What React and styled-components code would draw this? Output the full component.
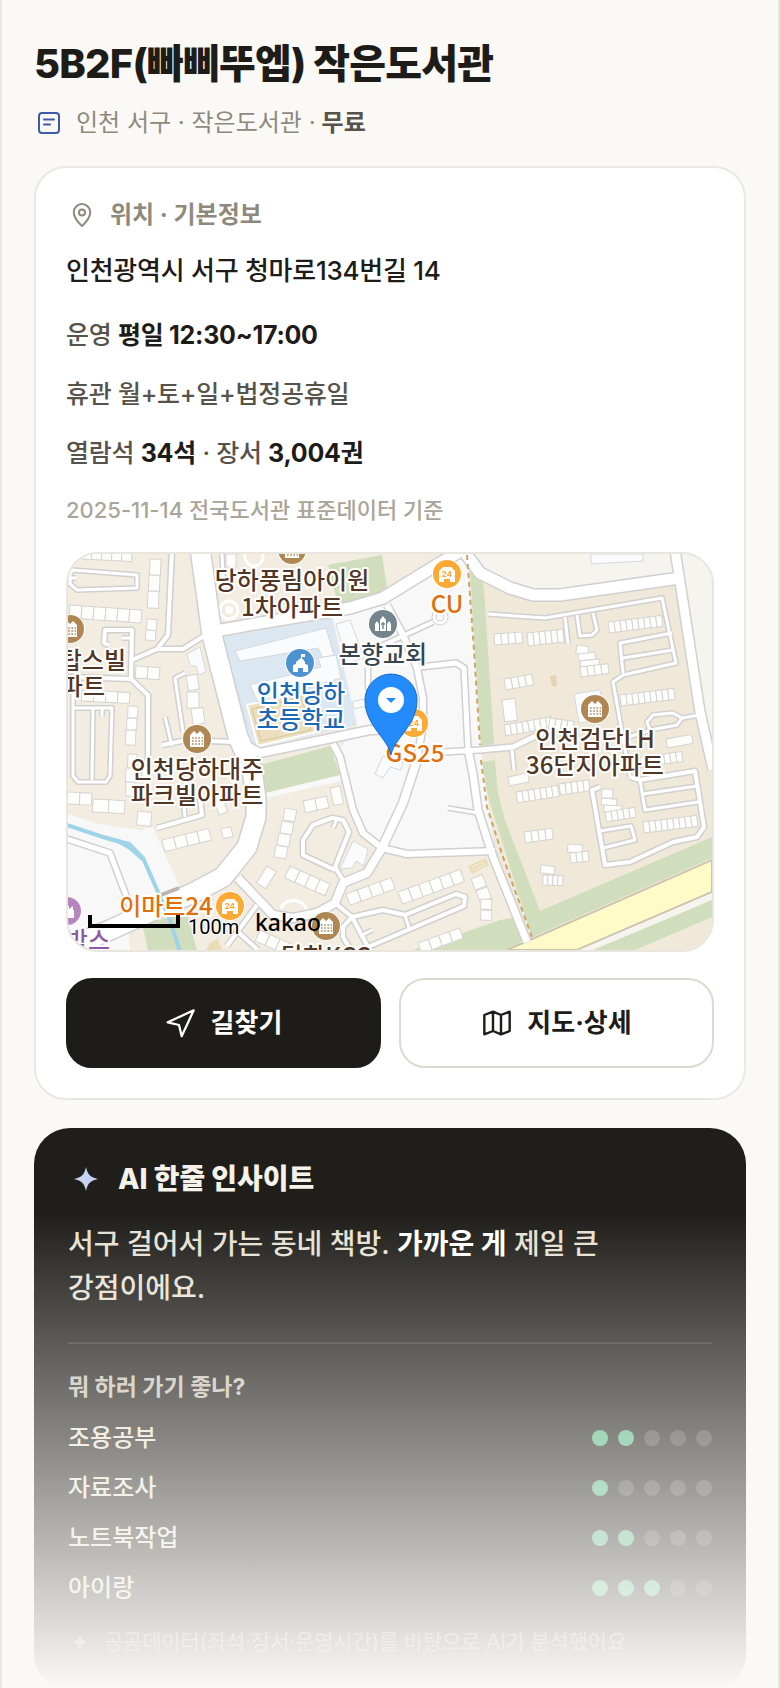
import React from 'react'
import styled, { createGlobalStyle } from 'styled-components';

const infoRows = [
  { id: 1, parts: [['운영 '], ['평일 12:30~17:00', true]] },
  { id: 2, parts: [['휴관 월+토+일+법정공휴일']] },
  { id: 3, parts: [['열람석 '], ['34석', true], [' · 장서 '], ['3,004권', true]] },
];

const scores = [
  { name: '조용공부', value: 2 },
  { name: '자료조사', value: 1 },
  { name: '노트북작업', value: 2 },
  { name: '아이랑', value: 3 },
];

// [d, width]
const roads = [
  ['M4 16 69 21 69 34 9 36 2 30 2 20Z', 3],
  ['M-4 24H8', 3],
  ['M104 -4 100 81 89 95 64 106', 4],
  ['M89 95H115L136 82', 4],
  ['M41 91 36 89 37 76H64L63 125', 4],
  ['M64 84H54', 3],
  ['M-4 123 63 125 80 141V204L76 222', 4],
  ['M5 140V222L10 228H38L42 222 44 154H5', 3],
  ['M25 154 24 226', 3],
  ['M34 155V162', 3],
  ['M117 119 107 124 115 178', 3],
  ['M97 163 104 192', 3],
  ['M94 191 119 186 166 188', 4],
  ['M89 274 134 261 132 244', 4],
  ['M117 263 115 244', 3],
  ['M-4 284 42 299 62 352', 5],
  ['M189 351 159 392', 4],
  ['M170 378 190 396', 4],
  ['M154 0 156 40', 3],
  ['M309 94 365 68', 4],
  ['M319 51 335 81 349 114 355 144 355 171 349 206', 6],
  ['M300 114V134L310 150', 4],
  ['M352 113 388 109 396 114 400 195', 5],
  ['M380 254 410 259', 3],
  ['M265 190 272 203 285 256 295 279 314 294 339 300 427 297', 6],
  ['M267 316 235 301V286L245 271 264 264 275 266 281 278 267 313 276 328', 4],
  ['M269 265 265 274', 3],
  ['M267 349 284 363 315 356 337 361 388 340 397 343 396 352 300 393 284 363', 4],
  ['M337 361 341 374', 3],
  ['M284 363 275 373 275 383 284 398', 4],
  ['M292 382 304 376', 3],
  ['M349 206 335 249 314 294 299 319 275 329 267 349 249 359 225 364 205 361 170 324', 8],
  ['M400 195 405 220 410 256 425 303 459 388', 7],
  ['M420 60 477 64 594 44 608 109 555 121 545 128 554 178 562 223', 3],
  ['M497 63 500 90', 3],
  ['M509 61 512 82 524 81 529 76 525 59', 3],
  ['M604 79 552 89 555 119', 3],
  ['M555 104 605 96', 3],
  ['M632 161 614 164 605 159 585 161 579 168 582 176 609 171 614 164', 3],
  ['M584 176 556 184', 3],
  ['M562 223 572 226 627 217 636 273 629 283 605 288 562 308 537 311 524 236 532 233', 4],
  ['M572 226 577 256 630 248', 3],
  ['M575 240 629 232', 3],
  ['M532 277 563 272 567 286 535 294', 3],
  ['M170 187 192 199 302 176 340 175', 8],
  ['M375 198 412 196 445 193 480 176', 5],
  ['M444 196 446 216', 3],
  ['M148 77 192 69 282 54 315 44 372 9 395 -4 412 19 442 34 465 41 492 41 612 24', 11],
  ['M607 -4 612 28 632 158 645 215', 9],
  ['M132 -6 144 81 170 183 184 215 188 245 188 263 179 293 155 323 125 339 92 353 42 376 -6 396', 19],
];

// rows of joined houses: x, y, count, unit width, unit height, turn
const houses = [
  [14, -4, 5, 10, 9, 3], [82, 5, 1, 11, 16, 2], [81, 21, 1, 11, 16, 2], [80, 37, 1, 11, 17, 2],
  [2, 51, 6, 12, 13, 4], [79, 65, 1, 10, 11, 4], [78, 76, 1, 10, 10, 4],
  [68, 112, 2, 12, 12, 4], [14, 136, 4, 12, 11, 3], [60, 152, 1, 10, 12, 2], [59, 164, 1, 10, 12, 2],
  [58, 176, 1, 10, 15, 2], [118, 122, 1, 11, 15, -10], [119, 138, 1, 12, 16, 0], [123, 155, 1, 12, 16, -8],
  [158, 0, 1, 10, 13, 0], [60, 200, 1, 9, 14, 2], [58, 214, 1, 9, 14, 2], [58, 228, 1, 9, 14, 2],
  [0, 238, 2, 12, 12, 3], [25, 245, 2, 16, 13, 3], [70, 257, 1, 14, 14, 6],
  [94, 286, 4, 12, 12, -14], [153, 275, 1, 10, 10, -14], [145, 244, 1, 9, 18, -20],
  [199, 312, 1, 11, 20, 32], [235, 247, 2, 12, 12, -12], [262, 234, 1, 10, 18, -12],
  [217, 254, 1, 12, 12, 10], [214, 267, 1, 12, 12, 10], [211, 279, 1, 12, 12, 10], [208, 291, 1, 12, 12, 10],
  [222, 312, 4, 11, 13, 24], [278, 340, 4, 12, 12, -20], [330, 338, 6, 11, 13, -20],
  [403, 325, 1, 12, 12, -22], [408, 337, 1, 12, 12, -20], [413, 345, 1, 11, 10, 3], [413, 356, 1, 11, 10, 3],
  [350, 389, 4, 11, 11, -20], [192, 376, 4, 11, 12, 24],
  [426, 80, 4, 7, 11, -4], [459, 79, 6, 6, 13, -6], [540, 68, 9, 6, 11, -7],
  [509, 91, 1, 12, 9, 8], [510, 100, 1, 17, 7, -6], [512, 107, 1, 19, 6, -6], [512, 113, 4, 7, 10, -7],
  [436, 125, 4, 7, 11, -10], [552, 141, 9, 6, 11, -7], [434, 146, 1, 13, 22, -7],
  [436, 171, 8, 6, 11, -10], [482, 164, 4, 6, 12, 8],
  [598, 185, 1, 26, 9, -10], [560, 205, 9, 6, 10, -8],
  [440, 223, 1, 20, 9, -12], [448, 238, 7, 6, 11, -9], [491, 230, 5, 6, 11, -8],
  [534, 235, 1, 11, 9, 2], [534, 244, 1, 15, 7, 5], [536, 251, 1, 18, 7, 3], [537, 258, 5, 6, 10, -9],
  [456, 278, 4, 7, 11, -8], [575, 268, 9, 6, 11, -7], [500, 290, 1, 15, 8, 4], [502, 299, 3, 6, 10, -6],
  [473, 311, 1, 14, 8, 6], [475, 321, 4, 5, 10, 2],
];

const labels = [
  { x: 224, y: 35, t: '당하풍림아이원' },
  { x: 224, y: 62, t: '1차아파트' },
  { x: 58, y: 115, t: '탑스빌', a: 'end' },
  { x: 37, y: 141, t: '파트', a: 'end' },
  { x: 233, y: 148, t: '인천당하', c: '#1d68b3' },
  { x: 233, y: 174, t: '초등학교', c: '#1d68b3' },
  { x: 315, y: 109, t: '본향교회', c: '#36454f' },
  { x: 379, y: 59, t: 'CU', c: '#e0700c' },
  { x: 347, y: 208, t: 'GS25', c: '#e0700c' },
  { x: 527, y: 194, t: '인천검단LH' },
  { x: 527, y: 220, t: '36단지아파트' },
  { x: 129, y: 224, t: '인천당하대주' },
  { x: 129, y: 250, t: '파크빌아파트' },
  { x: 98, y: 361, t: '이마트24', c: '#e0700c' },
  { x: 42, y: 395, t: '박스', a: 'end', c: '#8e59a3' },
  { x: 258, y: 411, t: '당하KCC' },
];

function House({x, y, n, w, h, r}) {
  return (
    <g transform={`translate(${x} ${y}) rotate(${r})`} fill="#fdfdfc" stroke="#d6d4d0" strokeWidth="1">
      {Array.from({ length: n }, (_, i) => <rect key={i} x={i * w} width={w} height={h} />)}
    </g>
  )
}

function Poi({x, y, kind}) {
  const color = { apt: '#ae8753', store: '#fda935', school: '#4e93d0', church: '#74858d', shop: '#b685bd' }[kind]
  return (
    <g transform={`translate(${x} ${y})`}>
      <circle r="15" fill="#fff" />
      <circle r="14" fill={color} />
      {kind === 'apt' && <>
        <path d="M-7 8V-4L-3-8 0-5 3-8 7-4V8Z" fill="#fff" />
        <path d="M-5-1H6M-5 2H6M-5 5H6" stroke={color} strokeWidth="1.6" strokeDasharray="1.6 1.6" />
      </>}
      {kind === 'store' && <>
        <path d="M-8 8V-3L-4-7H4L8-3V8H3V5H-3V8Z" fill="#fff" />
        <text y="3" textAnchor="middle" fontFamily="Inter, sans-serif" fontSize="8" fontWeight="700" fill={color}>24</text>
      </>}
      {kind === 'school' && <path d="M-7 9V2L-4 1V-1L1-5V-9H5V-6H2V-5L5-1V1L8 2V9H3V5H-2V9Z" fill="#fff" />}
      {kind === 'church' && <>
        <path d="M-8 7V0L-6-3-4 0V7ZM4 7V0L6-3 8 0V7ZM-3 7V-4L0-8 3-4V7Z" fill="#fff" />
        <path d="M0-2V5M-2 0H2" stroke={color} strokeWidth="1.4" />
      </>}
      {kind === 'shop' && <path d="M-7 7V-5H2V-2L6-5V-1H7V7Z" fill="#fff" />}
    </g>
  )
}

function MapView() {
  return (
    <MapSvg viewBox="0 0 644 396" preserveAspectRatio="xMidYMid slice" role="img" aria-label="지도">
      <rect width="644" height="396" fill="#f3ede1" />
      <path d="M400 0H644V396H440L412 200Z" fill="#f0e8d9" />
      <path d="M395 0H644V200L612 24 492 41 442 34Z" fill="#f5f4ef" />
      <path d="M412 298 428 300 460 388 345 396 300 396 320 300Z" fill="#f3ede1" />
      <path d="M264 60 320 45 395 0 400 20 413 196 427 300 340 303 312 295 285 260 268 200 289 172Z" fill="#f8f8f8" />
      <path d="M0 260 30 270 72 276 85 273 112 334 60 366 62 396H0Z" fill="#f8f8f8" />
      <path d="M192 237 272 221 273 227 198 244Z" fill="#f8f8f8" />
      <path d="M155 83 264 64 289 171 187 194 170 150Z" fill="#dce8f1" />
      <path d="M179 151 236 138 248 178 190 192Z" fill="#ebdfc0" stroke="#fff" strokeWidth="2" />
      <path d="M184 155 233 143 243 176 193 187Z" fill="none" stroke="#d8c594" strokeWidth="1" />
      <g fill="#fafbfc" stroke="#d5d9dc">
        <path d="M167 97 258 74 266 101 255 104 250 94 172 107Z" />
        <path d="M182 131 253 113 250 104 268 101 273 124 190 148Z" />
        <path d="M268 70 282 66 296 104 279 109Z" />
        <path d="M284 148 300 144 302 151 286 155Z" />
        <path d="M523 0H575V7L523 10Z" />
        <path d="M506 140 532 136 536 165 511 169Z" />
        <path d="M315 202 335 208 333 216 322 213 315 224 307 220Z" />
        <path d="M285 287 300 295 296 312 288 307 284 314 272 315Z" />
        <path d="M119 100 132 93 138 118 131 121 128 112 122 112Z" />
      </g>
      <g fill="none" stroke="#fff" strokeWidth="3">
        <circle cx="186" cy="3" r="9" /><circle cx="161" cy="56" r="9" />
        <path d="M213 355A12 9 0 0 1 238 357" />
      </g>
      <circle cx="161" cy="56" r="4" fill="#fff" />
      <g fill="#d1debd">
        <path d="M260 11 314 1 319 34 292 49 270 51Z" />
        <path d="M192 211 262 192 272 221 197 239Z" />
        <path d="M401 0H407L416 34 426 190 413 192Z" />
        <path d="M414 208 427 206 430 239 437 266 472 357 644 283V304L464 383 445 323 419 239Z" />
        <path d="M345 396 432 366 449 363 456 386 439 396Z" />
        <path d="M74 369 119 360 129 396H80Z" />
      </g>
      <path d="M439 396 644 306V338L509 396Z" fill="#fffbc9" stroke="#cdc3ae" strokeWidth="2" />
      <path d="M511 396 644 339V346L592 368 525 396Z" fill="#f5f4ef" />
      <path d="M525 396 592 368 644 346V363L567 396Z" fill="#d1debd" />
      <path d="M400 312 418 304 421 311 404 320Z" fill="#ebdcb8" />
      <path d="M404 313 415 308 417 311 406 316Z" fill="none" stroke="#f6efdc" />
      <path d="M142 389 150 385 154 396H138Z" fill="#ebdcb8" />
      <path d="M482 122 488 121 489 132 484 132Z" fill="#e3d5b2" />
      {houses.map(([x, y, n, w, h, r], i) => <House key={i} x={x} y={y} n={n} w={w} h={h} r={r} />)}
      <g fill="none" stroke="#d0d0d0" strokeLinejoin="round">
        {roads.map(([d, w], i) => <path key={i} d={d} strokeWidth={w + 3} />)}
        <circle cx="372" cy="63" r="6" strokeWidth="5" />
      </g>
      <g fill="none" stroke="#fff" strokeLinejoin="round">
        {roads.map(([d, w], i) => <path key={i} d={d} strokeWidth={w} />)}
        <circle cx="372" cy="63" r="6" strokeWidth="3" />
      </g>
      <path d="M-4 270 35 283 62 291 75 304 90 338 102 366 112 398" fill="none" stroke="#9fd3e8" strokeWidth="4" />
      <path d="M35 281 62 288 77 304 74 307 60 295Z" fill="#9fd3e8" />
      <path d="M93 341 111 334" stroke="#bdb5ac" strokeWidth="4" />
      <path d="M399 1 406 96 412 191M413 206 419 253 437 309 464 383" fill="none" stroke="#cba662" strokeWidth="2" strokeDasharray="5 4" />
      <Poi x={2} y={75} kind="apt" />
      <Poi x={129} y={185} kind="apt" />
      <Poi x={224} y={-4} kind="apt" />
      <Poi x={527} y={155} kind="apt" />
      <Poi x={258} y={372} kind="apt" />
      <Poi x={315} y={70} kind="church" />
      <Poi x={232} y={109} kind="school" />
      <Poi x={379} y={20} kind="store" />
      <Poi x={346} y={169} kind="store" />
      <Poi x={162} y={352} kind="store" />
      <Poi x={-1} y={357} kind="shop" />
      {labels.map(l => (
        <MapLabel key={l.t} x={l.x} y={l.y} textAnchor={l.a || 'middle'} fill={l.c || '#503626'}>{l.t}</MapLabel>
      ))}
      <path d="M323 201C320 184 297 172 297 146A26 26 0 0 1 349 146C349 172 326 184 323 201Z" fill="#238cfa" stroke="#1769d2" strokeWidth="1" />
      <circle cx="323" cy="146" r="13" fill="#fff" />
      <path d="M318 144H328L323 149Z" fill="#238cfa" />
      <path d="M22 361V372H110V361" fill="none" stroke="#000" strokeWidth="4" />
      <ScaleText x="120" y="380">100m</ScaleText>
      <BrandText x="187" y="377">kakao</BrandText>
    </MapSvg>
  )
}

function Sparkle({size}) {
  return (
    <svg width={size} height={size} viewBox="0 0 24 24" fill="currentColor" aria-hidden="true">
      <path d="M12 0C13.5 7.5 16.500 10.500 24 12C16.500 13.500 13.500 16.500 12 24C10.500 16.500 7.500 13.500 0 12C7.500 10.500 10.500 7.500 12 0Z" />
    </svg>
  )
}

export default function App() {
  return (
    <>
      <GlobalStyle />
      <Shell>
        <Title>5B2F(빠삐뚜엡) 작은도서관</Title>
        <Meta>
          <IconSlot $color="#3f58a8">
            <svg width="24" height="24" viewBox="0 0 24 24" fill="none" stroke="currentColor" strokeWidth="2" strokeLinecap="round" aria-hidden="true">
              <rect x="2" y="2" width="20" height="20" rx="3" />
              <path d="M7 8.500H17M7 13.500H13" />
            </svg>
          </IconSlot>
          <MetaText>
            <span>인천 서구 · 작은도서관 ·</span>
            <Fee>무료</Fee>
          </MetaText>
        </Meta>

        <Card>
          <CardTitle>
            <IconSlot $width="32px">
              <svg width="24" height="24" viewBox="0 0 24 24" fill="none" stroke="currentColor" strokeWidth="2" aria-hidden="true">
                <path d="M12 23C12 23 3.800 16 3.800 9.300A8.200 8.200 0 0 1 20.200 9.300C20.200 16 12 23 12 23Z" />
                <circle cx="12" cy="9.500" r="3" />
              </svg>
            </IconSlot>
            위치 · 기본정보
          </CardTitle>
          <Address>인천광역시 서구 청마로134번길 14</Address>
          <InfoList>
            {infoRows.map(row => (
              <InfoRow key={row.id}>
                {row.parts.map(([text, strong]) => strong ? <strong key={text}>{text}</strong> : text)}
              </InfoRow>
            ))}
          </InfoList>
          <Source>2025-11-14 전국도서관 표준데이터 기준</Source>
          <MapBox><MapView /></MapBox>
          <Actions>
            <Action type="button" $dark>
              <svg width="32" height="32" viewBox="0 0 24 24" fill="none" stroke="currentColor" strokeWidth="1.700" strokeLinejoin="round" aria-hidden="true">
                <path d="M2 11.500 21.500 2.500 12.500 22 10.500 13.500Z" />
              </svg>
              길찾기
            </Action>
            <Action type="button">
              <svg width="32" height="32" viewBox="0 0 24 24" fill="none" stroke="currentColor" strokeWidth="1.800" strokeLinejoin="round" aria-hidden="true">
                <path d="M9 3.500 2.500 6V20.500L9 18 15 20.500 21.500 18V3.500L15 6ZM9 3.500V18M15 6V20.500" />
              </svg>
              지도·상세
            </Action>
          </Actions>
        </Card>

        <Insight>
          <InsightTitle>
            <IconSlot $width="36px" $color="#c8d3f2"><Sparkle size={24} /></IconSlot>
            AI 한줄 인사이트
          </InsightTitle>
          <Summary>서구 걸어서 가는 동네 책방. <strong>가까운 게</strong> 제일 큰 강점이에요.</Summary>
          <Scores>
            <ScoreTitle>뭐 하러 가기 좋나?</ScoreTitle>
            {scores.map(s => (
              <ScoreRow key={s.name}>
                {s.name}
                <Dots>
                  {[1, 2, 3, 4, 5].map(n => <Dot key={n} $on={n <= s.value} />)}
                </Dots>
              </ScoreRow>
            ))}
          </Scores>
          <Note>
            <NoteIcon><Sparkle size={16} /></NoteIcon>
            공공데이터(좌석·장서·운영시간)를 바탕으로 AI가 분석했어요
          </Note>
        </Insight>
        <Fade />
      </Shell>
    </>
  )
}

const GlobalStyle = createGlobalStyle`
  * {
    box-sizing: border-box;
    margin: 0;
  }
  body {
    background: #faf9f6;
    color: #1e1c18;
    font-family: Inter, 'Noto Sans CJK KR', sans-serif;
    word-break: keep-all;
  }
`;

const Shell = styled.main`
  position: relative;
  height: 100vh;
  overflow: hidden;
  padding: 39px 32px 0;
  border: solid #e8e6df;
  border-width: 0 2px;
`;

const Title = styled.h1`
  font-size: 40px;
  line-height: 50px;
  font-weight: 800;
  letter-spacing: -0.02em;
`;

const Meta = styled.p`
  display: flex;
  align-items: center;
  gap: 12px;
  margin-top: 19px;
  font-size: 24px;
  line-height: 30px;
  color: #8f897d;
`;

const MetaText = styled.span`
  display: flex;
  gap: 6px;
`;

const Fee = styled.span`
  color: #57534a;
  font-weight: 600;
`;

const IconSlot = styled.span`
  display: flex;
  justify-content: center;
  width: ${p => p.$width || '30px'};
  color: ${p => p.$color || 'inherit'};
`;

const Card = styled.section`
  margin-top: 28px;
  padding: 31px 30px 30px;
  background: #fff;
  border: 2px solid #ebe8e1;
  border-radius: 32px;
`;

const CardTitle = styled.h2`
  display: flex;
  align-items: center;
  gap: 12px;
  font-size: 24px;
  line-height: 32px;
  font-weight: 700;
  color: #8f897d;
`;

const Address = styled.p`
  margin-top: 20px;
  font-size: 26px;
  line-height: 40px;
  font-weight: 500;
  letter-spacing: -0.01em;
`;

const InfoList = styled.div`
  display: grid;
  gap: 19px;
  margin-top: 24px;
`;

const InfoRow = styled.p`
  font-size: 25px;
  line-height: 40px;
  font-weight: 500;
  letter-spacing: -0.01em;
  color: #57534a;

  strong {
    color: #1e1c18;
    font-weight: 700;
  }
`;

const Source = styled.p`
  margin-top: 21px;
  font-size: 22px;
  line-height: 32px;
  font-weight: 500;
  color: #aaa598;
`;

const MapBox = styled.div`
  height: 400px;
  margin-top: 26px;
  overflow: hidden;
  border: 2px solid #e8e6df;
  border-radius: 32px;
`;

const MapSvg = styled.svg`
  display: block;
  width: 100%;
  height: 100%;
`;

const MapLabel = styled.text`
  font-family: 'Noto Sans CJK KR', sans-serif;
  font-size: 24px;
  font-weight: 500;
  stroke: #fff;
  stroke-width: 4px;
  stroke-linejoin: round;
  paint-order: stroke;
`;

const ScaleText = styled.text`
  font-family: Roboto, sans-serif;
  font-size: 20px;
  stroke: #fff;
  stroke-width: 2px;
  paint-order: stroke;
`;

const BrandText = styled.text`
  font-family: 'Noto Sans', sans-serif;
  font-size: 23px;
  font-weight: 500;
`;

const Actions = styled.div`
  display: grid;
  grid-template-columns: 1fr 1fr;
  gap: 18px;
  margin-top: 26px;
`;

const Action = styled.button`
  display: flex;
  align-items: center;
  justify-content: center;
  gap: 14px;
  height: 90px;
  border: 2px solid ${p => p.$dark ? '#1e1c18' : '#dddacf'};
  border-radius: 26px;
  background: ${p => p.$dark ? '#1e1c18' : '#fff'};
  color: ${p => p.$dark ? '#fff' : '#1e1c18'};
  font-family: inherit;
  font-size: 26px;
  line-height: 32px;
  font-weight: 700;
`;

const Insight = styled.section`
  margin-top: 28px;
  padding: 34px;
  background: #201e1b;
  border-radius: 36px;
`;

const InsightTitle = styled.h2`
  display: flex;
  align-items: center;
  gap: 14px;
  font-size: 28px;
  line-height: 34px;
  font-weight: 800;
  color: #f5f2ea;
`;

const Summary = styled.p`
  margin-top: 26px;
  font-size: 28px;
  line-height: 44px;
  font-weight: 500;
  color: #e6e1d5;

  strong {
    color: #fff;
    font-weight: 700;
  }
`;

const Scores = styled.div`
  margin-top: 32px;
  padding-top: 28px;
  border-top: 2px solid rgba(255, 255, 255, 0.12);
`;

const ScoreTitle = styled.h3`
  margin-bottom: 11px;
  font-size: 23px;
  line-height: 30px;
  font-weight: 700;
  color: #c9c3b5;
`;

const ScoreRow = styled.div`
  display: flex;
  align-items: center;
  justify-content: space-between;
  height: 50px;
  font-size: 24px;
  line-height: 32px;
  font-weight: 500;
  color: #ebe6da;
`;

const Dots = styled.div`
  display: flex;
  gap: 10px;
`;

const Dot = styled.i`
  width: 16px;
  height: 16px;
  border-radius: 50%;
  background: ${p => p.$on ? '#56b787' : 'rgba(255, 255, 255, 0.17)'};
`;

const Note = styled.p`
  display: flex;
  align-items: center;
  gap: 12px;
  margin-top: 15px;
  font-size: 21px;
  line-height: 28px;
  letter-spacing: -0.01em;
  color: #8f897d;
`;

const NoteIcon = styled.span`
  display: flex;
  justify-content: center;
  width: 24px;
`;

const Fade = styled.div`
  position: absolute;
  inset: auto 0 0;
  height: 476px;
  margin: 0 -2px;
  background: linear-gradient(rgba(250, 249, 246, 0), #faf9f6);
  pointer-events: none;
`;
